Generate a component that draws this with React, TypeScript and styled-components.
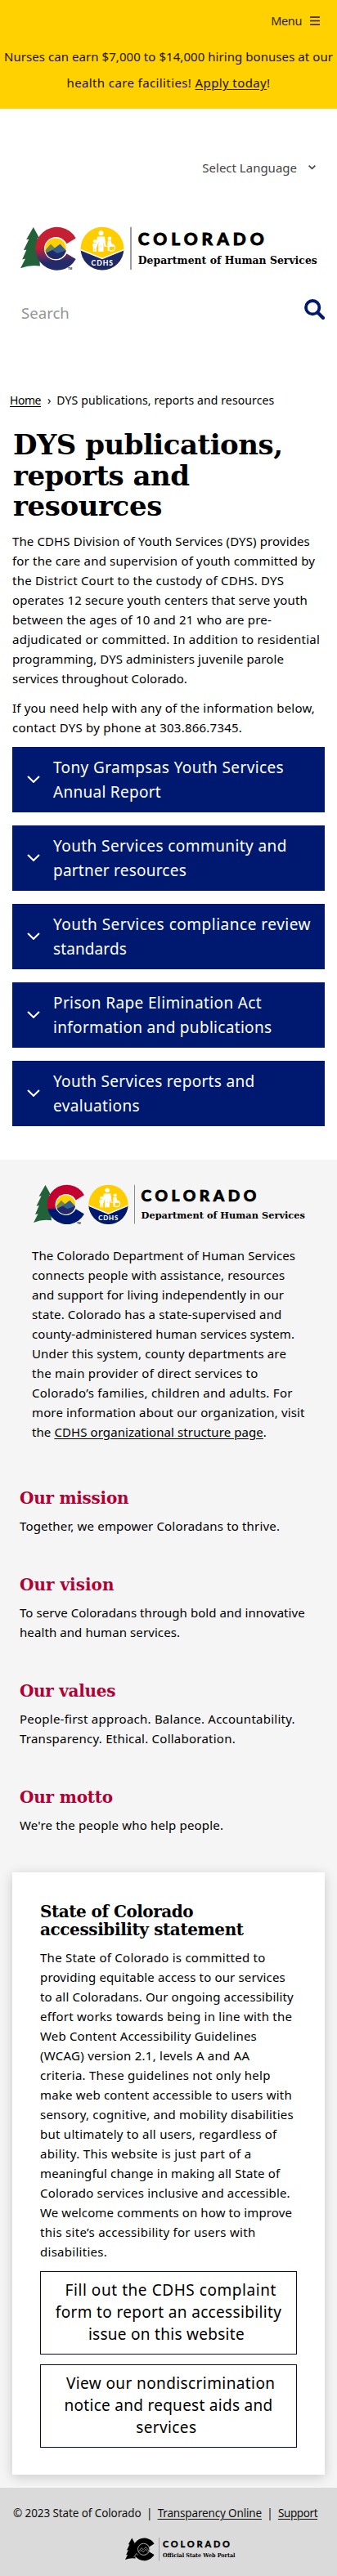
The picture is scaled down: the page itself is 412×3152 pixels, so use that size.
import React from 'react';
import styled, { createGlobalStyle } from 'styled-components';

const sans = '"Noto Sans", "Open Sans", sans-serif';
const slab = '"DejaVu Serif", serif';
const navy = '#001970';
const red = '#b00034';

const GlobalStyle = createGlobalStyle`
  * { box-sizing: border-box; }
  body { margin: 0; background: #fff; color: #000; font: 15px/24px ${sans}; }
  h1, h2, h3, p { margin: 0; }
`;

const Page = styled.div`
  width: 412px;
  height: 3152px;
  overflow: hidden;
`;

const Line = styled.span<{ $track?: number }>`
  display: block;
  white-space: pre;
  letter-spacing: ${(p) => p.$track ?? 0}px;
`;

const Link = styled.a`
  color: inherit;
  text-decoration: underline;
  text-underline-offset: 2px;
`;

type TextLine = [text: string, track: number];

const Lines = ({ of }: { of: TextLine[] }) => (
  <>
    {of.map(([text, track]) => (
      <Line key={text} $track={track}>{text}</Line>
    ))}
  </>
);

/* ---------- top bar ---------- */

const TopBar = styled.header`
  height: 133px;
  padding-top: 13px;
  background: #ffd100;
`;

const MenuButton = styled.div`
  display: flex;
  justify-content: flex-end;
  align-items: center;
  gap: 10px;
  height: 24px;
  padding-right: 21px;
  margin-bottom: 16px;
  color: #2b1d22;
  font-size: 14.5px;
  letter-spacing: -0.4px;
`;

const Alert = styled.div`
  color: #1c1200;
  line-height: 32px;
  text-align: center;
`;

/* ---------- masthead ---------- */

const LanguageRow = styled.div`
  display: flex;
  justify-content: flex-end;
  align-items: center;
  gap: 14px;
  height: 24px;
  margin-top: 60px;
  padding-right: 26px;
  color: #444;
`;

const BrandRow = styled.div`
  display: flex;
  margin: 60px 0 28px 25px;
`;

const SearchRow = styled.div`
  display: flex;
  justify-content: space-between;
  height: 40px;
  padding: 7px 15px 0 26px;
`;

const SearchHint = styled.span`
  padding-top: 5px;
  color: #959595;
  font-size: 18.6px;
`;

const Breadcrumb = styled.nav`
  display: flex;
  margin: 79px 0 24.4px 12px;
  font-size: 14px;
`;

const Crumb = styled.span<{ $track: number; $gap?: number }>`
  letter-spacing: ${(p) => p.$track}px;
  margin-right: ${(p) => p.$gap ?? 0}px;
`;

/* ---------- article ---------- */

const Article = styled.main`
  padding: 0 15px;
`;

const Title = styled.h1`
  margin: 0 0 11.4px 1px;
  font: bold 34px/37.4px ${slab};
`;

const Paragraph = styled.p`
  margin-bottom: 12px;
`;

const Accordion = styled.div`
  display: flex;
  flex-direction: column;
  gap: 16px;
`;

const Panel = styled.div`
  display: flex;
  align-items: center;
  gap: 16px;
  height: 80px;
  padding-left: 18px;
  background: ${navy};
  color: #fff;
  font-size: 19px;
  line-height: 30px;
`;

const PanelLabel = styled.div`
  padding-bottom: 1px;
`;

/* ---------- about ---------- */

const About = styled.section`
  height: 1625px;
  margin-top: 41px;
  padding-top: 30px;
  background: #f5f5f5;
`;

const AboutBrand = styled.div`
  display: flex;
  margin-left: 40.5px;
`;

const Intro = styled.p`
  margin: 25.7px 0 56.5px 39px;
`;

const Statement = styled.div`
  margin: 0 24px 47.7px;
`;

const StatementTitle = styled.h2`
  margin-bottom: 10.3px;
  color: ${red};
  font: bold 20px/24px ${slab};
`;

const Card = styled.div`
  height: 737px;
  margin: -2px 15px 0;
  padding: 37px 34px 0;
  background: #fff;
  box-shadow: 0 3px 14px rgba(0, 0, 0, 0.18);
`;

const CardTitle = styled.h3`
  margin-bottom: 11.2px;
  font: bold 20px/22px ${slab};
`;

const OutlineButton = styled.div`
  height: 102px;
  margin-bottom: 12px;
  padding-top: 9px;
  border: 1px solid #0b0b3a;
  font-size: 19px;
  line-height: 27px;
  text-align: center;
`;

/* ---------- footer ---------- */

const Footer = styled.footer`
  height: 108px;
  padding-top: 19px;
  background: #dadada;
`;

const Legal = styled.div`
  display: flex;
  padding-left: 16px;
  color: #111;
  font-size: 13.5px;
  white-space: nowrap;
`;

const Bar = styled.span`
  width: 20px;
  text-align: center;
`;

const Portal = styled.div`
  display: flex;
  margin: 18px 0 0 153px;
`;

/* ---------- drawings ---------- */

const Chevron = ({ size, color, weight }: { size: number; color: string; weight: number }) => (
  <svg width={size} height={size * 0.6} viewBox="0 0 15 9" fill="none" stroke={color} strokeWidth={weight}>
    <path d="M1 1l6.5 6.3L14 1" />
  </svg>
);

const treePath =
  'M15.8 1L23.5 15 20.5 14.5 24 24 21.5 23.5 25 33 22.5 33 24 48.5Q12 46.5 0 51.3L6 39.5 2.2 40.5 7.4 28.5 3.8 29.3 10.4 15.8 7.2 16Z';
const cPath =
  'M67.7 14.5A26.4 26.4 0 1 0 67.7 40L56.5 33.2A14 14 0 1 1 56.5 21.3Z';

const BrandLogo = ({ width, blend }: { width: number; blend?: boolean }) => (
  <svg width={width} height={(width * 54) / 364} viewBox="0 0 364 54">
    <defs>
      <linearGradient id={blend ? 'cBlend' : 'cSplit'} x1="0.55" y1="0" x2="0.62" y2="1">
        <stop offset={blend ? '0.45' : '0.55'} stopColor={blend ? '#c41f33' : '#c3002f'} />
        <stop offset={blend ? '0.68' : '0.6'} stopColor={blend ? '#5b2a63' : '#001970'} />
        <stop offset="0.8" stopColor={blend ? '#232a68' : '#001970'} />
      </linearGradient>
      <clipPath id="sun"><circle cx="43" cy="27.3" r="12.8" /></clipPath>
      <clipPath id="disc"><circle cx="100" cy="27.2" r="26.4" /></clipPath>
    </defs>
    <path d={treePath} fill="#236139" />
    <circle cx="43" cy="27.2" r="14.2" fill="#fff" />
    <path d={cPath} fill={`url(#${blend ? 'cBlend' : 'cSplit'})`} />
    <circle cx="43" cy="27.3" r="14" fill="#fff" />
    <g clipPath="url(#sun)">
      <rect x="29" y="13" width="28" height="29" fill="#ffd100" />
      <path d="M29 31L37 21.5 42 26.5 35 36H29Z" fill="#75884a" />
      <path d="M33 33L48.5 21.5 58 32V42H33Z" fill="#35608f" />
      <path d="M29 33.5L39 29 45 33 57 29V42H29Z" fill="#202a6a" />
    </g>
    <text x="58" y="53.4" fontFamily="Liberation Sans" fontSize="3.6" fontWeight="bold" fill="#222">TM</text>
    <g clipPath="url(#disc)">
      <rect x="73" y="0" width="54" height="54" fill="#ffcd00" />
      <path d="M72 28L100 39.5 128 28V54H72Z" fill={blend ? '#1d2868' : '#001970'} />
      <path d="M72 28L100 39.5 128 28" fill="none" stroke="#fff" strokeWidth="1.6" />
    </g>
    <g fill="#fff">
      <circle cx="98.5" cy="8.3" r="3" />
      <path d="M94 12.5h9l1.6 12-2 .4-1-6V31h-2.6v-8h-1V31h-2.6V18.5l-1.6 6-2-.6Z" />
      <circle cx="91" cy="18.2" r="2.2" />
      <path d="M88 21h6v3.5l-1 .5V31h-1.7v-4h-.8v4h-1.7v-6l-.8-.4Z" />
      <circle cx="97.4" cy="22.4" r="1.9" />
      <path d="M95.5 24.8h4V31h-1.4v-3h-1.2v3h-1.4Z" />
      <circle cx="109" cy="14.8" r="2.3" />
      <path d="M106.5 17.5h4.4l.8 5.5h3v2h-5.5l-.8 5h-1.8l.4-5h-2.5V24h2Z" />
      <circle cx="111.3" cy="26" r="4.2" fill="none" stroke="#fff" strokeWidth="1.2" />
    </g>
    <text x="86.5" y="47.6" fontFamily="Lato" fontSize="8.6" fontWeight="900" fill="#fff" textLength="26.5">CDHS</text>
    <path d="M135 .8V53" stroke="#8b8b8b" strokeWidth={blend ? 1.7 : 1.1} />
    <text x="143.8" y="23" fontFamily="Lato" fontSize="21" fontWeight="900" stroke="#000" strokeWidth=".8" textLength="154">COLORADO</text>
    <text x="143.8" y="45.6" fontFamily="DejaVu Serif" fontSize="12.4" fontWeight="bold" textLength="219">Department of Human Services</text>
  </svg>
);

const PortalLogo = () => (
  <svg width="140" height="30" viewBox="0 0 140 30">
    <g transform="scale(.525)">
      <path d={treePath} fill="#000" />
      <circle cx="43" cy="27.2" r="14.4" />
      <path d={cPath} fill="#000" />
      <circle cx="43" cy="27.2" r="13.4" fill="none" stroke="#ccc" strokeWidth="1.5" />
      <path d="M31 33l7-9 4 4 6-6 8 9M35 33l3-4 4 5 6-7 5 6" fill="none" stroke="#ccc" strokeWidth="1.2" />
      <path d="M20 46l6-9 4 4" fill="none" stroke="#ccc" strokeWidth="1.3" />
    </g>
    <path d="M41.5 0V28.5" stroke="#999" strokeWidth=".9" />
    <text x="46" y="12" fontFamily="Lato" fontSize="11" fontWeight="900" stroke="#000" strokeWidth=".3" textLength="82">COLORADO</text>
    <text x="46" y="24" fontFamily="DejaVu Serif" fontSize="7" fontWeight="bold" textLength="88.5" lengthAdjust="spacingAndGlyphs">Official State Web Portal</text>
  </svg>
);

const MenuIcon = () => (
  <svg width="12" height="11" viewBox="0 0 12 11" stroke="#22124f" strokeWidth="1.7">
    <path d="M0 1h12M0 5.5h12M0 10h12" />
  </svg>
);

const SearchIcon = () => (
  <svg width="25" height="25" viewBox="0 0 25 25" fill="none" stroke={navy}>
    <circle cx="10.2" cy="10.2" r="8.2" strokeWidth="3.8" />
    <path d="M16.3 16.3L23 23" strokeWidth="4.2" strokeLinecap="round" />
  </svg>
);

/* ---------- content ---------- */

const overview: TextLine[][] = [
  [
    ['The CDHS Division of Youth Services (DYS) provides', 0.12],
    ['for the care and supervision of youth committed by', 0.18],
    ['the District Court to the custody of CDHS. DYS', 0.22],
    ['operates 12 secure youth centers that serve youth', 0.16],
    ['between the ages of 10 and 21 who are pre-', 0.18],
    ['adjudicated or committed. In addition to residential', 0.25],
    ['programming, DYS administers juvenile parole', 0.09],
    ['services throughout Colorado.', 0.02],
  ],
  [
    ['If you need help with any of the information below,', 0.2],
    ['contact DYS by phone at 303.866.7345.', 0.23],
  ],
];

const panels: TextLine[][] = [
  [['Tony Grampsas Youth Services', 0.38], ['Annual Report', 0.28]],
  [['Youth Services community and', 0.42], ['partner resources', 0.22]],
  [['Youth Services compliance review', 0.51], ['standards', 0.11]],
  [['Prison Rape Elimination Act', 0.38], ['information and publications', 0.31]],
  [['Youth Services reports and', 0.32], ['evaluations', 0.36]],
];

const intro: TextLine[] = [
  ['The Colorado Department of Human Services', 0.07],
  ['connects people with assistance, resources', 0.16],
  ['and support for living independently in our', 0.11],
  ['state. Colorado has a state-supervised and', 0.15],
  ['county-administered human services system.', 0.07],
  ['Under this system, county departments are', 0.14],
  ['the main provider of direct services to', 0.26],
  ['Colorado’s families, children and adults. For', 0.28],
  ['more information about our organization, visit', 0.13],
];

const statements: { title: TextLine; body: TextLine[] }[] = [
  { title: ['Our mission', -0.27], body: [['Together, we empower Coloradans to thrive.', 0.17]] },
  {
    title: ['Our vision', 0],
    body: [['To serve Coloradans through bold and innovative', 0.06], ['health and human services.', 0.09]],
  },
  {
    title: ['Our values', -0.3],
    body: [['People-first approach. Balance. Accountability.', 0.24], ['Transparency. Ethical. Collaboration.', 0.24]],
  },
  { title: ['Our motto', -0.2], body: [["We're the people who help people.", 0.17]] },
];

const accessibility: TextLine[] = [
  ['The State of Colorado is committed to', 0.26],
  ['providing equitable access to our services', 0.15],
  ['to all Coloradans. Our ongoing accessibility', 0.14],
  ['effort works towards being in line with the', 0.24],
  ['Web Content Accessibility Guidelines', 0.18],
  ['(WCAG) version 2.1, levels A and AA', 0.25],
  ['criteria. These guidelines not only help', 0.24],
  ['make web content accessible to users with', 0.19],
  ['sensory, cognitive, and mobility disabilities', 0.21],
  ['but ultimately to all users, regardless of', 0.26],
  ['ability. This website is just part of a', 0.35],
  ['meaningful change in making all State of', 0.12],
  ['Colorado services inclusive and accessible.', 0.17],
  ['We welcome comments on how to improve', 0.12],
  ['this site’s accessibility for users with', 0.29],
  ['disabilities.', 0.27],
];

const actions: TextLine[][] = [
  [[' Fill out the CDHS complaint', 0.56], ['form to report an accessibility', 0.34], ['issue on this website ', 0.28]],
  [[' View our nondiscrimination', 0.4], ['notice and request aids and', 0.28], ['services ', 0.36]],
];

export default function App() {
  return (
    <Page>
      <GlobalStyle />
      <TopBar>
        <MenuButton>Menu <MenuIcon /></MenuButton>
        <Alert>
          <Line $track={0.06}>Nurses can earn $7,000 to $14,000 hiring bonuses at our</Line>
          <Line $track={0.39}>health care facilities! <Link>Apply today</Link>!</Line>
        </Alert>
      </TopBar>

      <LanguageRow>Select Language <Chevron size={9} color="#444" weight={2.6} /></LanguageRow>
      <BrandRow><BrandLogo width={364} blend /></BrandRow>
      <SearchRow>
        <SearchHint>Search</SearchHint>
        <SearchIcon />
      </SearchRow>
      <Breadcrumb>
        <Crumb $track={-0.46} $gap={8}><Link>Home</Link></Crumb>
        <Crumb $track={0} $gap={7}>›</Crumb>
        <Crumb $track={0.12}>DYS publications, reports and resources</Crumb>
      </Breadcrumb>

      <Article>
        <Title>
          <Lines of={[['DYS publications,', -0.5], ['reports and', -0.5], ['resources', -0.4]]} />
        </Title>
        {overview.map((p) => (
          <Paragraph key={p[0][0]}><Lines of={p} /></Paragraph>
        ))}
        <Accordion>
          {panels.map((p) => (
            <Panel key={p[0][0]}>
              <Chevron size={16} color="#fff" weight={1.9} />
              <PanelLabel><Lines of={p} /></PanelLabel>
            </Panel>
          ))}
        </Accordion>
      </Article>

      <About>
        <AboutBrand><BrandLogo width={333} /></AboutBrand>
        <Intro>
          <Lines of={intro} />
          <Line $track={0.09}>the <Link>CDHS organizational structure page</Link>.</Line>
        </Intro>
        {statements.map((s) => (
          <Statement key={s.title[0]}>
            <StatementTitle><Lines of={[s.title]} /></StatementTitle>
            <p><Lines of={s.body} /></p>
          </Statement>
        ))}
        <Card>
          <CardTitle><Lines of={[['State of Colorado', -0.5], ['accessibility statement', -0.4]]} /></CardTitle>
          <Paragraph><Lines of={accessibility} /></Paragraph>
          {actions.map((a) => (
            <OutlineButton key={a[0][0]}><Lines of={a} /></OutlineButton>
          ))}
        </Card>
      </About>

      <Footer>
        <Legal>
          <Line $track={-0.1}>© 2023 State of Colorado</Line>
          <Bar>|</Bar>
          <Line $track={-0.16}><Link>Transparency Online</Link></Line>
          <Bar>|</Bar>
          <Line $track={-0.4}><Link>Support</Link></Line>
        </Legal>
        <Portal><PortalLogo /></Portal>
      </Footer>
    </Page>
  );
}
